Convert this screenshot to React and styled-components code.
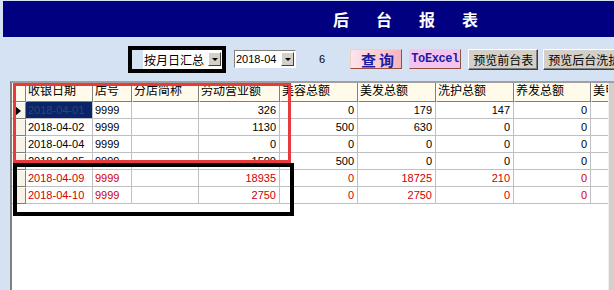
import React from 'react';
import styled, { createGlobalStyle } from 'styled-components';

const GlobalStyle = createGlobalStyle`
  body {
    margin: 0;
    background: #d4e2f4;
    font-family: "Liberation Sans", "Noto Sans CJK SC", sans-serif;
  }
`;

const COLS = '14px 67px 39px 67px 81px 78px 78px 78px 77px 78px';

const Page = styled.div`
  width: 614px;
  height: 290px;
  overflow: hidden;
  display: flex;
  flex-direction: column;
  background: #d4e2f4;
`;

const TitleBar = styled.div`
  height: 36px;
  margin: 1px 0 0 3px;
  background: #000080;
  display: flex;
  align-items: center;
  padding-left: 330px;
  color: #fff;
  font-family: "Noto Sans CJK SC", sans-serif;
  font-weight: bold;
  font-size: 16px;
  letter-spacing: 27px;
  white-space: nowrap;
`;

const Toolbar = styled.div`
  height: 44px;
  display: flex;
  align-items: center;
  padding-left: 128px;
  white-space: nowrap;
  font-size: 12px;
  & > * {
    flex-shrink: 0;
  }
`;

const MarkFrame = styled.div`
  border: 4px solid #000;
  height: 19px;
  display: flex;
  padding-left: 11px;
  width: 79px;
`;

const Combo = styled.div`
  display: flex;
  align-items: center;
  background: #fff;
  width: ${p => p.$w}px;
  height: ${p => p.$h}px;
  box-sizing: border-box;
  border: ${p => (p.$inset ? '1px solid' : 'none')};
  border-color: #808080 #fff #fff #808080;
  font-size: ${p => p.$fs}px;
  padding-left: 1px;
`;

const ComboText = styled.span`
  flex: 1;
  overflow: hidden;
`;

const DropBtn = styled.div`
  width: 13px;
  height: 14px;
  box-sizing: border-box;
  background: #d4d0c8;
  border: 1px solid;
  border-color: #fff #404040 #404040 #fff;
  display: flex;
  align-items: center;
  justify-content: center;
  margin-right: 1px;
  &::after {
    content: '';
    border-left: 3px solid transparent;
    border-right: 3px solid transparent;
    border-top: 3px solid #000;
  }
`;

const Count = styled.span`
  margin: 0 25px 0 23px;
  font-size: 11px;
`;

const FancyBtn = styled.div`
  width: ${p => p.$w}px;
  height: 20px;
  box-sizing: border-box;
  display: flex;
  align-items: center;
  justify-content: center;
  border: 1px solid;
  border-color: #f0d0c0 #905040 #905040 #f0d0c0;
  background: ${p => p.$bg};
  color: #1c1ca8;
  font-weight: bold;
  margin-right: 7px;
  overflow: hidden;
`;

const QueryText = styled.span`
  font-family: "Noto Sans CJK SC", serif;
  font-size: 15px;
  letter-spacing: 3px;
  line-height: 1;
  padding-left: 6px;
`;

const ExcelText = styled.span`
  font-family: "Liberation Mono", monospace;
  font-size: 12px;
  letter-spacing: -0.4px;
`;

const GrayBtn = styled.div`
  height: 21px;
  box-sizing: border-box;
  padding: 0 4px;
  display: flex;
  align-items: center;
  background: #d4d0c8;
  border: 1px solid;
  border-color: #fff #404040 #404040 #fff;
  box-shadow: inset -1px -1px 0 #808080;
  font-size: 12px;
  margin-right: 5px;
`;

const Panel = styled.div`
  flex: 1;
  margin-left: 10px;
  border-left: 2px solid #808080;
  border-top: 2px solid #a0a0a0;
  background: #fff;
  display: flex;
  position: relative;
`;

const TableArea = styled.div`
  flex: 1;
  overflow: hidden;
`;

const Strip = styled.div`
  width: 5px;
  background: #d4d0c8;
  border-left: 1px solid #f0f0f0;
`;

const Row = styled.div`
  display: grid;
  grid-template-columns: ${COLS};
  height: ${p => p.$h}px;
  color: ${p => (p.$red ? '#d00000' : '#000')};
`;

const Head = styled.div`
  box-sizing: border-box;
  background: #fffaea;
  border-right: 1px solid #808080;
  border-bottom: 1px solid #808080;
  border-left: 1px solid #fff;
  font-size: 12px;
  line-height: 17px;
  padding-left: 1px;
  white-space: nowrap;
  overflow: hidden;
`;

const Indicator = styled.div`
  box-sizing: border-box;
  background: #f7f3e6;
  border: 1px solid;
  border-color: #fff #808080 #808080 #fff;
  display: flex;
  align-items: center;
  padding-left: 2px;
  &::after {
    content: '';
    display: ${p => (p.$active ? 'block' : 'none')};
    border-top: 5px solid transparent;
    border-bottom: 5px solid transparent;
    border-left: 6px solid #000;
  }
`;

const Cell = styled.div`
  box-sizing: border-box;
  border-right: 1px solid #c0c0c0;
  border-bottom: 1px solid #c0c0c0;
  font-size: 11px;
  line-height: 16px;
  padding: 0 3px 0 2px;
  text-align: ${p => (p.$num ? 'right' : 'left')};
  white-space: nowrap;
  overflow: hidden;
  background: ${p => (p.$sel ? '#0a246a' : 'transparent')};
  color: ${p => (p.$sel ? '#33426a' : 'inherit')};
`;

const Mark = styled.div`
  position: absolute;
  left: ${p => p.$x}px;
  top: ${p => p.$y}px;
  width: ${p => p.$w}px;
  height: ${p => p.$h}px;
  box-sizing: border-box;
  border: ${p => p.$b}px solid ${p => p.$c};
  pointer-events: none;
`;

const heads = ['收银日期', '店号', '分店简称', '劳动营业额', '美容总额', '美发总额', '洗护总额', '养发总额', '美甲总额'];

const rows = [
  { date: '2018-04-01', v: [326, 0, 179, 147, 0], sel: true },
  { date: '2018-04-02', v: [1130, 500, 630, 0, 0] },
  { date: '2018-04-04', v: [0, 0, 0, 0, 0] },
  { date: '2018-04-05', v: [1500, 500, 0, 0, 0] },
  { date: '2018-04-09', v: [18935, 0, 18725, 210, 0], red: true },
  { date: '2018-04-10', v: [2750, 0, 2750, 0, 0], red: true },
];

export default function App() {
  return (
    <Page>
      <GlobalStyle />
      <TitleBar>后台报表</TitleBar>
      <Toolbar>
        <MarkFrame>
          <Combo $w={79} $h={19} $fs={12}>
            <ComboText>按月日汇总</ComboText>
            <DropBtn />
          </Combo>
        </MarkFrame>
        <Combo $w={62} $h={18} $fs={11} $inset style={{ marginLeft: 8 }}>
          <ComboText>2018-04</ComboText>
          <DropBtn />
        </Combo>
        <Count>6</Count>
        <FancyBtn $w={52} $bg="linear-gradient(to right, #ffe4ec, #f7b4bc)">
          <QueryText>查询</QueryText>
        </FancyBtn>
        <FancyBtn $w={52} $bg="#f4c4f0">
          <ExcelText>ToExcel</ExcelText>
        </FancyBtn>
        <GrayBtn>预览前台表</GrayBtn>
        <GrayBtn>预览后台洗护表</GrayBtn>
      </Toolbar>
      <Panel>
        <TableArea>
          <Row $h={19}>
            <Head />
            {heads.map(h => (
              <Head key={h}>{h}</Head>
            ))}
          </Row>
          {rows.map(r => (
            <Row key={r.date} $h={17} $red={r.red}>
              <Indicator $active={r.sel} />
              <Cell $sel={r.sel}>{r.date}</Cell>
              <Cell>9999</Cell>
              <Cell />
              {r.v.map((n, i) => (
                <Cell key={i} $num>{n}</Cell>
              ))}
              <Cell />
            </Row>
          ))}
        </TableArea>
        <Strip />
        <Mark $x={1} $y={0} $w={278} $h={80} $b={3} $c="#e83a3a" />
        <Mark $x={1} $y={80} $w={281} $h={53} $b={4} $c="#000" />
      </Panel>
    </Page>
  );
}
